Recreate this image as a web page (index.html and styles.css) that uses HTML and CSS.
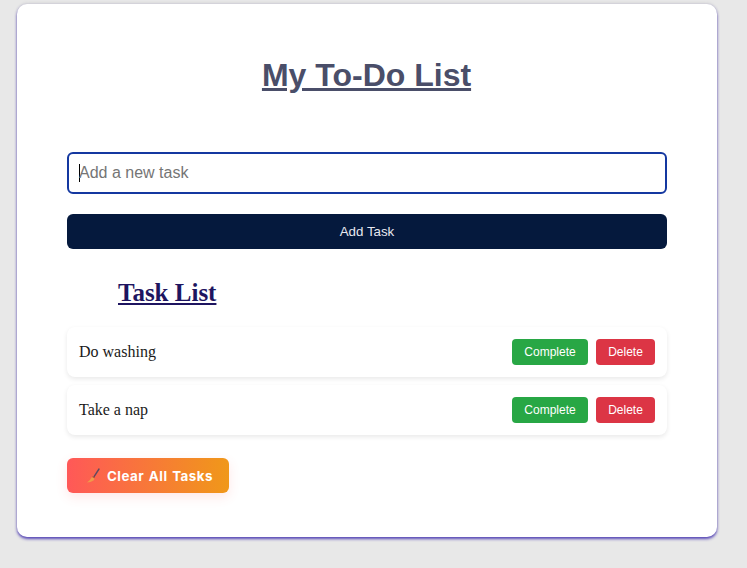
FILE: index.html
```html
<!DOCTYPE html>
<html lang="en">
<head>
<meta charset="utf-8">
<title>My To-Do List</title>
<link rel="stylesheet" href="styles.css">
</head>
<body>
<main class="card">
  <h1 class="title">My To-Do List</h1>
  <form class="task-form">
    <div class="input-box"><span class="caret"></span><span class="placeholder">Add a new task</span></div>
    <button type="button" class="add-btn">Add Task</button>
  </form>
  <h2 class="list-title">Task List</h2>
  <ul class="tasks">
    <li class="task">
      <span class="task-name">Do washing</span>
      <span class="actions"><button type="button" class="btn complete">Complete</button><button type="button" class="btn delete">Delete</button></span>
    </li>
    <li class="task">
      <span class="task-name">Take a nap</span>
      <span class="actions"><button type="button" class="btn complete">Complete</button><button type="button" class="btn delete">Delete</button></span>
    </li>
  </ul>
  <button type="button" class="clear-btn">
    <svg class="broom" viewBox="0 0 16 16" width="16" height="16" aria-hidden="true">
      <path d="M14 1 L8.6 9.4" stroke="#5f4a60" stroke-width="1.4" stroke-linecap="round" fill="none"/>
      <path d="M7.4 8.2 L10 10 L8.6 12.6 Q5.5 14.6 2 14.6 Q5 12.5 7.4 8.2 Z" fill="#f09a4a"/>
      <path d="M7.4 8.4 L9.8 10.1" stroke="#c0503a" stroke-width="1.2" fill="none"/>
    </svg>
    <span>Clear All Tasks</span>
  </button>
</main>
</body>
</html>
```

FILE: styles.css
```css
* { box-sizing: border-box; }
html, body { margin: 0; padding: 0; }
body {
  background: #e8e8e8;
  height: 568px;
  overflow: hidden;
  padding: 4px 30px 0 17px;
}
.card {
  width: 700px;
  height: 533px;
  background: #fff;
  border-radius: 10px;
  padding: 50px 50px 0;
  box-shadow: 0 2px 3px rgba(50, 30, 170, 0.8), 0 -1px 3px rgba(120, 120, 140, 0.2);
}
.title {
  margin: 0;
  height: 42px;
  padding-right: 1px;
  text-align: center;
  font: bold 32px/42px "Liberation Sans", Arial, sans-serif;
  color: #4a4e69;
  text-decoration: underline;
}
.task-form { margin-top: 56px; display: flex; flex-direction: column; gap: 20px; }
.input-box {
  height: 42px;
  border: 2px solid #1438a0;
  border-radius: 6px;
  padding: 0 10px;
  display: flex;
  align-items: center;
  font: 16px "Liberation Sans", Arial, sans-serif;
  color: #757575;
}
.caret { width: 1px; height: 18px; background: #000; margin-right: -1px; }
.add-btn {
  height: 35px;
  border: 0;
  border-radius: 6px;
  background: #05193d;
  color: #e8e8f0;
  font: 13.33px "Liberation Sans", Arial, sans-serif;
  padding: 0;
}
.list-title {
  margin: 29px 0 0 51px;
  font: bold 25px/29px "Liberation Serif", "Times New Roman", serif;
  color: #1e1560;
  text-decoration: underline;
}
.tasks { list-style: none; margin: 20px 0 0; padding: 0; display: flex; flex-direction: column; gap: 8px; }
.task {
  height: 50px;
  background: #fff;
  border-radius: 8px;
  padding: 0 12px;
  display: flex;
  align-items: center;
  justify-content: space-between;
  box-shadow: 0 2px 5px rgba(0, 0, 0, 0.09);
}
.task-name { font: 16px "Liberation Serif", "Times New Roman", serif; color: #1a1a1a; }
.actions { display: flex; gap: 8px; }
.btn {
  height: 26px;
  border: 0;
  border-radius: 4px;
  color: #fff;
  font: 12px "Liberation Sans", Arial, sans-serif;
  padding: 0 0 1px;
}
.complete { background: #28a745; width: 76px; }
.delete { background: #dc3545; width: 59px; }
.clear-btn {
  margin-top: 23px;
  width: 162px;
  height: 35px;
  border: 0;
  border-radius: 6px;
  padding: 0 0 0 18px;
  display: flex;
  align-items: center;
  gap: 6px;
  background: linear-gradient(90deg, #ff5858, #f09819);
  color: #fff;
  font: bold 13.33px Inter, "Noto Sans", sans-serif;
  letter-spacing: 0.5px;
  word-spacing: 1px;
  box-shadow: 0 4px 12px rgba(255, 88, 88, 0.14);
}
.broom { flex: none; }
```
